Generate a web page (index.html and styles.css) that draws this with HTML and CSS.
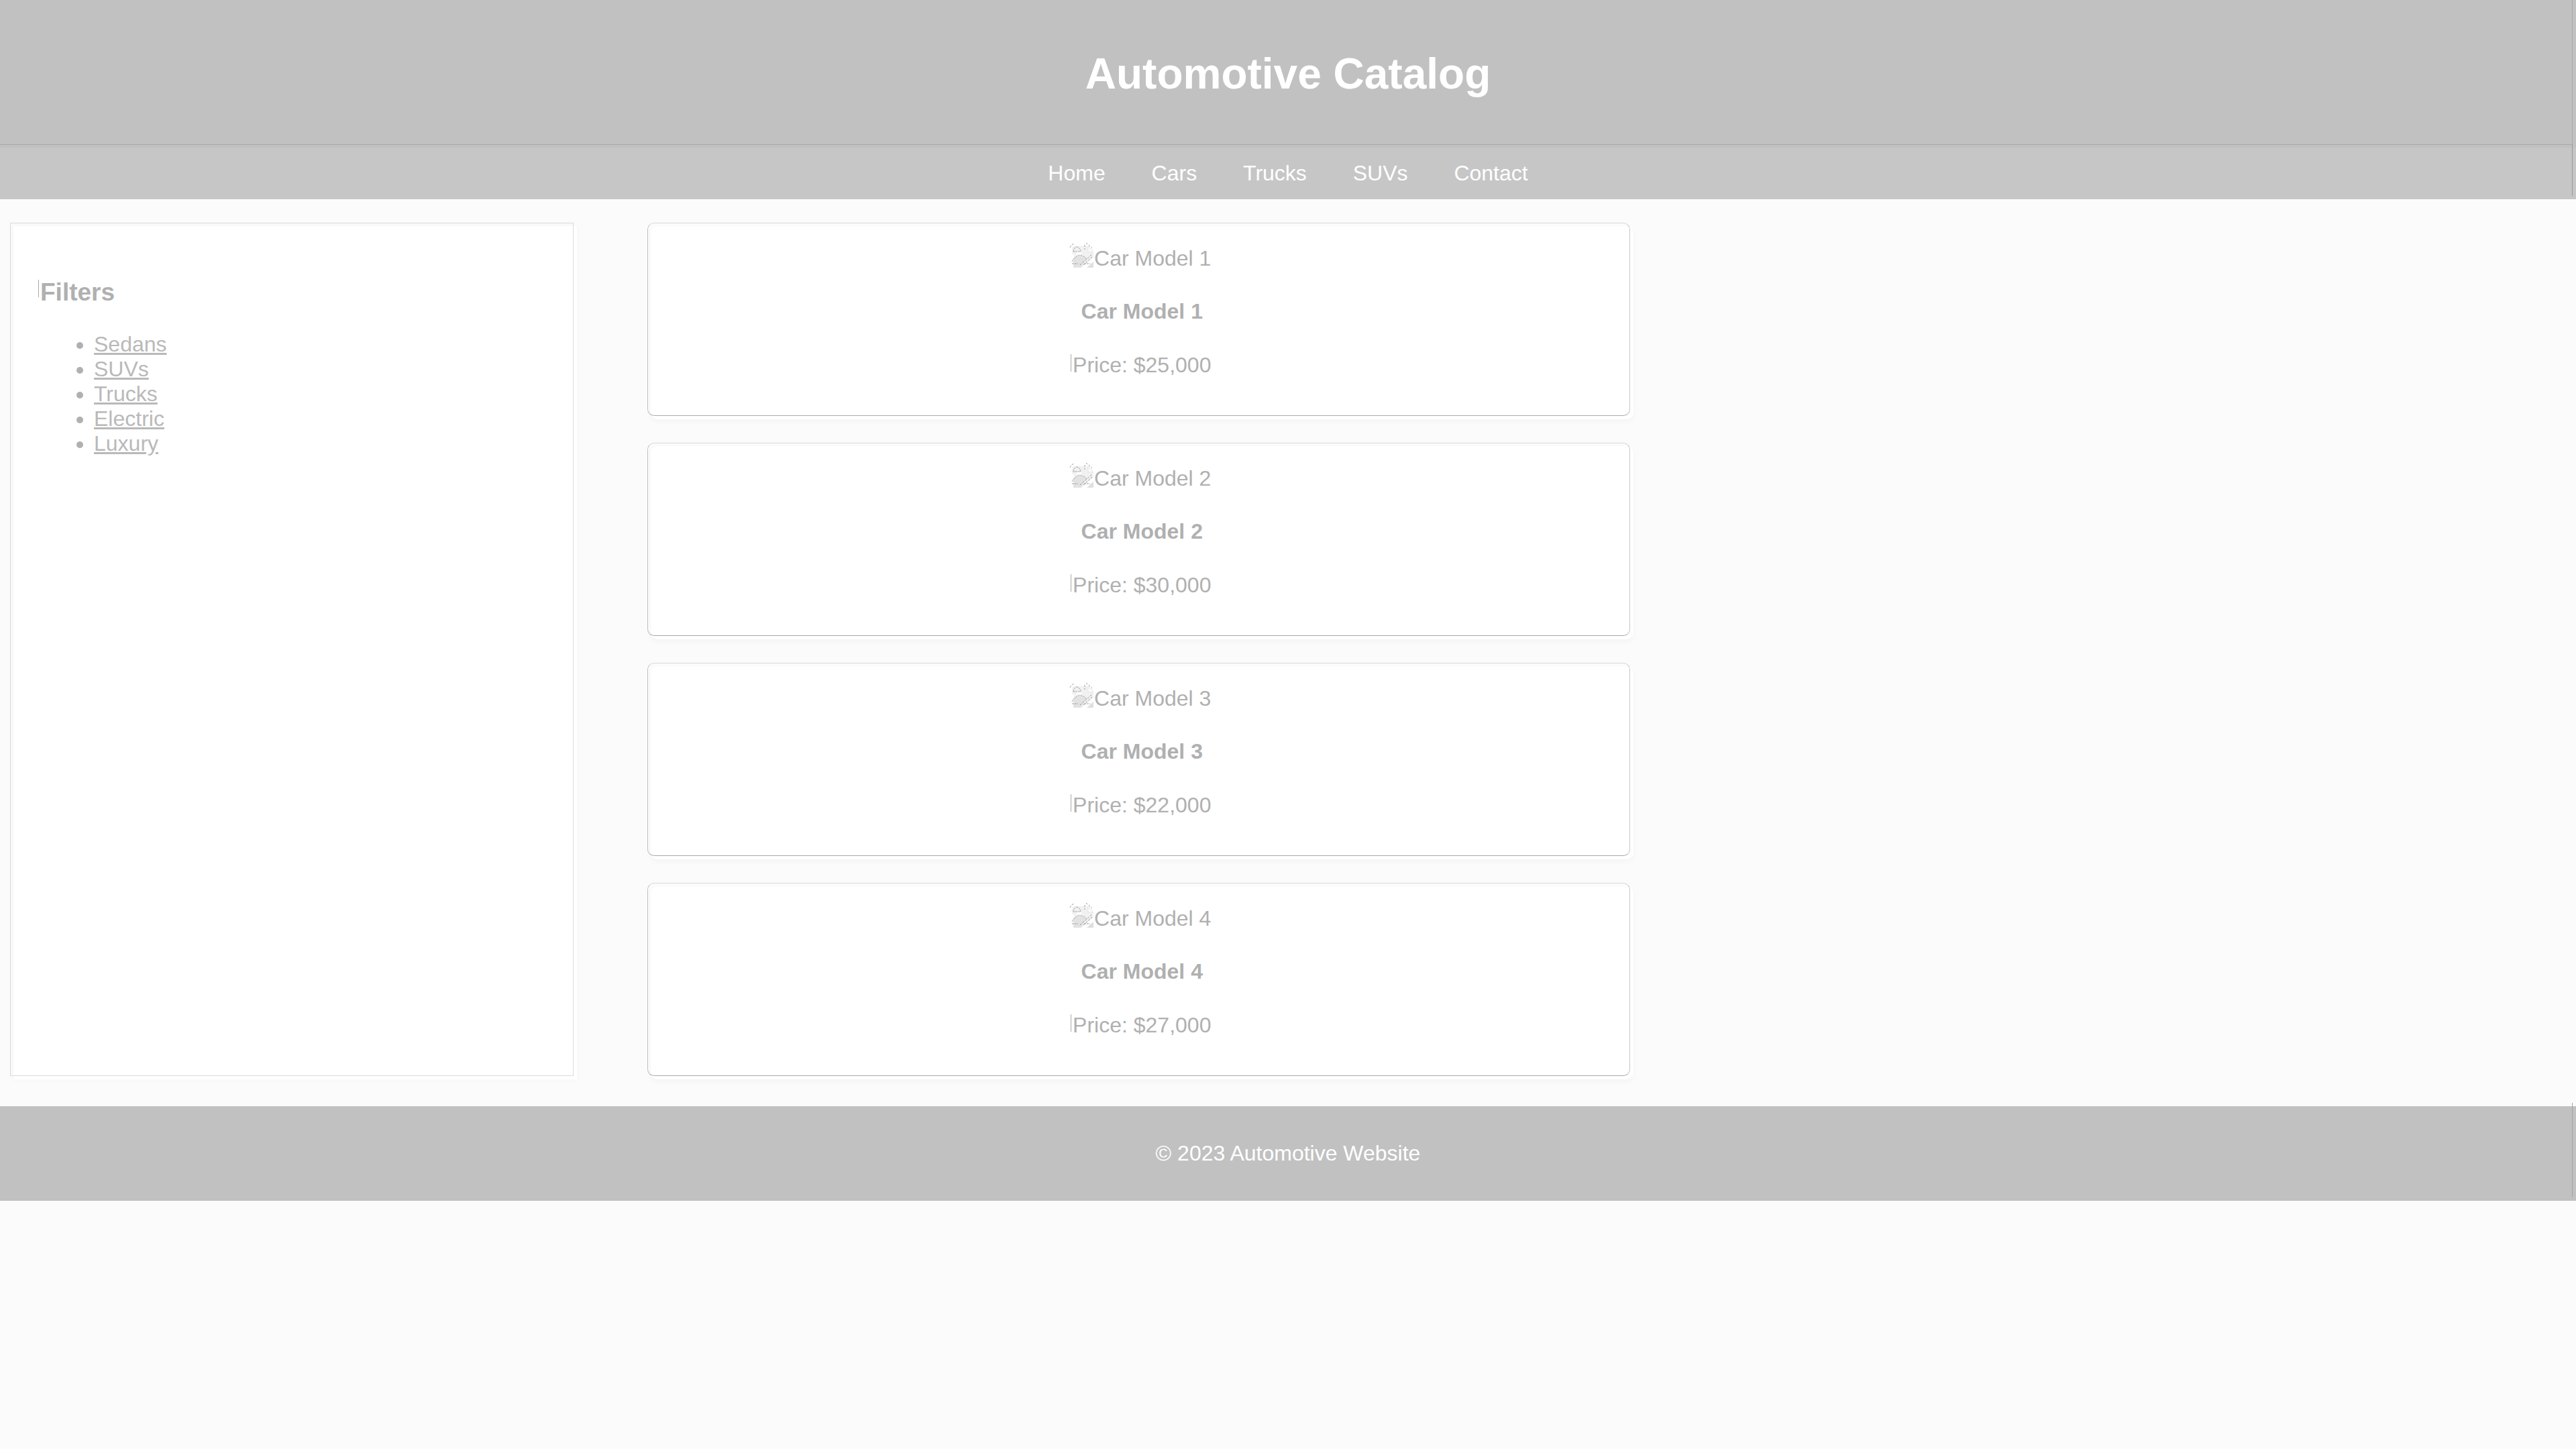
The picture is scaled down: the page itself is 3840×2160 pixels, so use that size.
FILE: index.html
```html
<!DOCTYPE html>
<html lang="en">
<head>
<meta charset="utf-8">
<title>Automotive Catalog</title>
<link rel="stylesheet" href="styles.css">
</head>
<body>
<svg class="defs" aria-hidden="true">
  <symbol id="pic" viewBox="0 0 32 32" overflow="visible">
    <path d="M-1 3q0-3 3-3h20l9 9v23H2V12h-3z" fill="#f1f1f1"/>
    <path d="M1 32V18q10-5 20 0L12 32z" fill="#e2e2e2"/>
    <path d="M5 12q1-4 4-5 4 1 5 5z" fill="#fff"/>
    <path d="M23 0v9h8z" fill="#fcfcfc" stroke="#e4e4e4"/>
    <path d="M13 32L32 16v6L22 32z" fill="#fff"/>
    <path d="M21 32l10-9v9z" fill="#dfdfdf"/>
    <path d="M1 8q1-6 5-7 5 1 6 7zM-1 23q4-8 11-9 7 0 11 5M-1 26h9M17 26h9" fill="none" stroke="#a0a0a0" stroke-dasharray="3 1"/>
    <path d="M11 28L29 12M16 28L29 16" fill="none" stroke="#999" stroke-dasharray="3 2"/>
    <path d="M-4 2q2-5 7-6M18-2v7M20-5l9 8" fill="none" stroke="#999" stroke-dasharray="3 2"/>
  </symbol>
</svg>
<header class="header"><h1 class="title">Automotive Catalog</h1></header>
<nav class="nav">
  <a href="#home">Home</a>
  <a href="#cars">Cars</a>
  <a href="#trucks">Trucks</a>
  <a href="#suvs">SUVs</a>
  <a href="#contact">Contact</a>
</nav>
<main class="layout">
  <aside class="sidebar">
    <h3 class="filters"><span class="edge">Filters</span></h3>
    <ul class="list">
      <li><a href="#sedans">Sedans</a></li>
      <li><a href="#suvs">SUVs</a></li>
      <li><a href="#trucks">Trucks</a></li>
      <li><a href="#electric">Electric</a></li>
      <li><a href="#luxury">Luxury</a></li>
    </ul>
  </aside>
  <section class="catalog">
    <article class="card">
      <div class="photo"><svg class="icon"><use href="#pic"/></svg>Car Model 1</div>
      <h4 class="name">Car Model 1</h4>
      <p class="price"><span class="edge">Price: $25,000</span></p>
    </article>
    <article class="card">
      <div class="photo"><svg class="icon"><use href="#pic"/></svg>Car Model 2</div>
      <h4 class="name">Car Model 2</h4>
      <p class="price"><span class="edge">Price: $30,000</span></p>
    </article>
    <article class="card">
      <div class="photo"><svg class="icon"><use href="#pic"/></svg>Car Model 3</div>
      <h4 class="name">Car Model 3</h4>
      <p class="price"><span class="edge">Price: $22,000</span></p>
    </article>
    <article class="card">
      <div class="photo"><svg class="icon"><use href="#pic"/></svg>Car Model 4</div>
      <h4 class="name">Car Model 4</h4>
      <p class="price"><span class="edge">Price: $27,000</span></p>
    </article>
  </section>
</main>
<footer class="footer"><p class="copyright">© 2023 Automotive Website</p></footer>
</body>
</html>
```
FILE: styles.css
```css
* { box-sizing: border-box; }

body {
  margin: 0;
  background: #fbfbfb;
  color: #b0b0b0;
  font: 32px/37px "Liberation Sans", Arial, sans-serif;
}

.defs { display: none; }

.header, .nav, .sidebar, .card, .footer { position: relative; }

/* Thin outlines set up and to the left of each panel */
.header::after, .nav::after, .sidebar::after, .card::after, .footer::after {
  content: "";
  position: absolute;
  inset: -5px 5px 5px -5px;
  border: 1px solid #dadada;
  pointer-events: none;
}

.header {
  padding: 30px;
  background: #c1c1c1;
  color: #fff;
  text-align: center;
}
.header::after { bottom: 4px; border-width: 0 1px 1px 0; border-color: #a9a9a9; }

.title { margin: 43px 0; font-size: 64px; line-height: 74px; }

.nav {
  padding: 20px;
  background: #c6c6c6;
  text-align: center;
}
.nav::after { border-width: 0 1px 0 0; border-color: #9a9a9a; }
.nav a { margin: 0 30px; color: #fff; text-decoration: none; }

.layout {
  display: grid;
  grid-template-columns: 22.1% 38.55%;
  column-gap: 110px;
  padding: 40px 20px;
}

.sidebar {
  padding: 40px;
  background: #fff;
  box-shadow: 0 0 10px rgba(0, 0, 0, 0.03);
}

.filters { margin: 37px 0 38px; font-size: 37px; line-height: 43px; }

/* Fine vertical rule before the first letter */
.edge { position: relative; }
.edge::before {
  content: "";
  position: absolute;
  left: -3px;
  top: 2px;
  height: 26px;
  border-left: 1px solid #a9a9a9;
}

.list { margin: 0; padding-left: 80px; }
.list a { color: #b9b9b9; }

.catalog { display: grid; row-gap: 40px; }

.card {
  padding: 30px;
  border-radius: 10px;
  background: #fff;
  box-shadow: 0 4px 10px rgba(0, 0, 0, 0.03);
  text-align: center;
}
.card::after {
  border-color: #dadada #c6c6c6 #a9a9a9 #c0c0c0;
  border-radius: 10px;
}

.photo { display: flex; justify-content: center; }
.icon { width: 32px; height: 32px; overflow: visible; }
.name { margin: 42px 0 43px; font-size: 32px; }
.price { margin: 0 0 32px; }

.footer {
  padding: 20px;
  background: #c1c1c1;
  color: #fff;
  text-align: center;
}
.footer::after { border-width: 0 1px 0 0; border-color: #a3a3a3; }
.copyright { margin: 32px 0; }
```
